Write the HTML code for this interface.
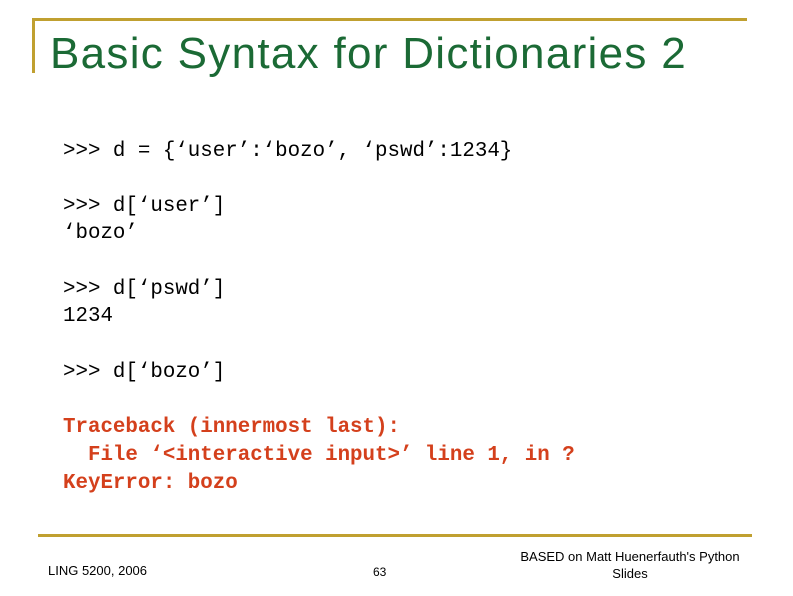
<!DOCTYPE html>
<html><head><meta charset="utf-8"><style>
body{margin:0;width:793px;height:596px;background:#fff;position:relative;overflow:hidden}
.a{position:absolute}
.c{font-family:"Liberation Mono",monospace;font-size:20.8px;line-height:1;white-space:pre;color:#000}
.r{color:#d4401c;font-weight:bold}
.f{font-family:"Liberation Sans",sans-serif;font-size:13px;color:#000}
</style></head><body>
<div class="a" style="left:33px;top:18px;width:714px;height:3px;background:#c0a030"></div>
<div class="a" style="left:32px;top:18px;width:3px;height:55px;background:#c0a030"></div>
<div class="a" style="left:50px;top:29px;font-family:'Liberation Sans',sans-serif;font-size:44px;letter-spacing:1.3px;color:#1b6a35;white-space:nowrap">Basic Syntax for Dictionaries 2</div>
<div class="a c" style="left:63px;top:142px">&gt;&gt;&gt; d = {‘user’:‘bozo’, ‘pswd’:1234}</div>
<div class="a c" style="left:63px;top:197px">&gt;&gt;&gt; d[‘user’]</div>
<div class="a c" style="left:63px;top:224px">‘bozo’</div>
<div class="a c" style="left:63px;top:280px">&gt;&gt;&gt; d[‘pswd’]</div>
<div class="a c" style="left:63px;top:307px">1234</div>
<div class="a c" style="left:63px;top:363px">&gt;&gt;&gt; d[‘bozo’]</div>
<div class="a c r" style="left:63px;top:418px">Traceback (innermost last):</div>
<div class="a c r" style="left:63px;top:446px">  File ‘&lt;interactive input&gt;’ line 1, in ?</div>
<div class="a c r" style="left:63px;top:474px">KeyError: bozo</div>
<div class="a" style="left:38px;top:534px;width:714px;height:3px;background:#c0a030"></div>
<div class="a f" style="left:48px;top:563px">LING 5200, 2006</div>
<div class="a f" style="left:373px;top:565px;font-size:12px">63</div>
<div class="a f" style="left:505px;top:548px;width:250px;text-align:center;line-height:17px">BASED on Matt Huenerfauth's Python Slides</div>
</body></html>
